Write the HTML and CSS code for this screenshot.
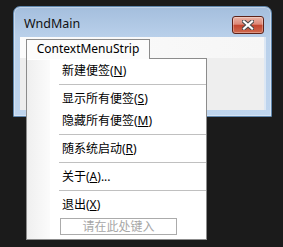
FILE: index.html
```html
<!DOCTYPE html>
<html lang="zh-CN">
<head>
<meta charset="UTF-8">
<title>WndMain</title>
<link rel="stylesheet" href="styles.css">
</head>
<body>

<!-- 窗体 -->
<div class="window">
  <div class="titlebar">
    <span class="title">WndMain</span>
    <button class="close" title="关闭">
      <svg width="12" height="10" viewBox="0 0 12 10">
        <path d="M2 1.5 L10 8.5 M10 1.5 L2 8.5" stroke="#4a4a4a" stroke-width="4.2" stroke-linecap="square"/>
        <path d="M2 1.5 L10 8.5 M10 1.5 L2 8.5" stroke="#fff" stroke-width="2.2" stroke-linecap="square"/>
      </svg>
    </button>
  </div>
  <div class="client">
    <div class="client-strip"></div>
  </div>
</div>

<!-- 设计器里的右键菜单 -->
<div class="ctxmenu">
  <div class="ctx-tab">ContextMenuStrip</div>
  <div class="ctx-panel">
    <div class="ctx-item">新建便签(<u>N</u>)</div>
    <div class="ctx-sep"></div>
    <div class="ctx-item">显示所有便签(<u>S</u>)</div>
    <div class="ctx-item">隐藏所有便签(<u>M</u>)</div>
    <div class="ctx-sep"></div>
    <div class="ctx-item">随系统启动(<u>R</u>)</div>
    <div class="ctx-sep"></div>
    <div class="ctx-item">关于(<u>A</u>)...</div>
    <div class="ctx-sep"></div>
    <div class="ctx-item">退出(<u>X</u>)</div>
    <div class="ctx-typehere"><span>请在此处键入</span></div>
  </div>
</div>

</body>
</html>
```

FILE: styles.css
```css
/* 基础 */
*{box-sizing:border-box;margin:0;padding:0}
body{background:#1b1b1b;padding:6px 0 0 13px;height:247px;overflow:hidden;
     font-family:"Noto Sans","Noto Sans CJK SC",sans-serif;font-size:12px;color:#000}

/* 窗体外框 */
.window{width:259px;height:111px;border:1px solid #5f86ad;border-radius:7px 7px 0 0;
        background:linear-gradient(#a4bedd,#b9d0ea 30px,#bfd5ee);
        box-shadow:inset 0 0 0 1px rgba(255,255,255,.35);
        display:flex;flex-direction:column}
.titlebar{height:30px;display:flex;justify-content:space-between;align-items:flex-start;padding-left:10px}
.title{line-height:14px;margin-top:10px;font-size:12.5px;color:#111}
.close{width:32px;height:18px;margin:9px 7px 0 0;border:1px solid #5d2219;border-radius:3px;
       background:linear-gradient(#eab3a6,#dd8877 45%,#c4462f 52%,#cf6a4f);
       box-shadow:inset 0 0 0 1px rgba(255,255,255,.3);
       display:flex;align-items:center;justify-content:center}
.close svg{display:block}

/* 客户区 */
.client{flex:1;margin:0 5px 6px 6px;background:#eeeeee;border-right:2px solid #dce7f4}
.client-strip{height:21px;background:linear-gradient(to right,#fbfbfb,#f6f6f6)}

/* 右键菜单 */
.ctxmenu{position:absolute;left:26px;top:39px;width:181px}
.ctx-tab{position:relative;z-index:1;width:124px;height:20px;margin-bottom:-1px;
         border:1px solid #8c8c8c;border-bottom:none;background:#fcfcfc;
         text-align:center;line-height:18px}
.ctx-panel{border:1px solid #8c8c8c;padding:1px 0;height:182px;
           background:linear-gradient(to right,#efefef,#fbfbfb) 0 1px/23px 100% no-repeat,#fff}
.ctx-item{height:22px;line-height:22px;padding-left:35px;white-space:nowrap}
.ctx-item u{text-underline-offset:1px}
.ctx-sep{height:6px;position:relative}
.ctx-sep::after{content:"";position:absolute;left:32px;right:0;top:2px;height:1px;background:#c0c0c0}
.ctx-typehere{height:21px;padding:2px 0 0 33px}
.ctx-typehere span{display:block;width:117px;height:17px;border:1px solid #ababab;
                   color:#a7a7a7;text-align:center;line-height:15px}
```
